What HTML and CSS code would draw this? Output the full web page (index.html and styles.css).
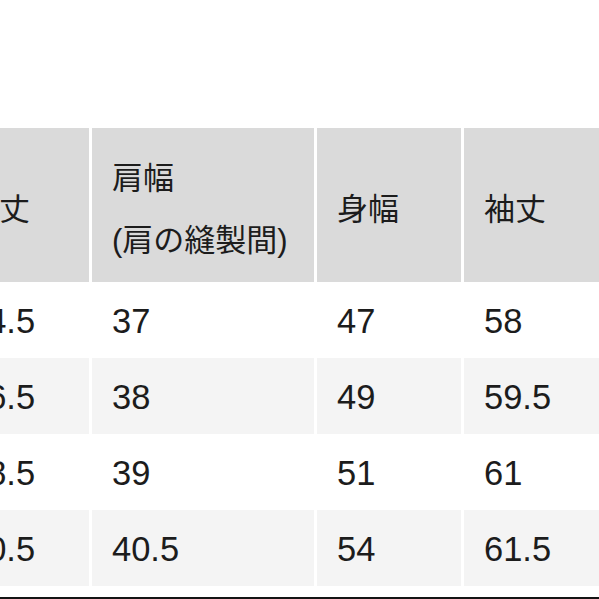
FILE: index.html
```html
<!DOCTYPE html>
<html lang="ja">
<head>
<meta charset="utf-8">
<link rel="stylesheet" href="styles.css">
</head>
<body>
<div class="page">
  <div class="sheet">
    <div class="grid">
      <div class="cell head"><span class="lbl">着丈</span></div>
      <div class="cell head"><span class="lbl">肩幅<br>(肩の縫製間)</span></div>
      <div class="cell head"><span class="lbl">身幅</span></div>
      <div class="cell head"><span class="lbl">袖丈</span></div>

      <div class="cell">64.5</div>
      <div class="cell">37</div>
      <div class="cell">47</div>
      <div class="cell">58</div>

      <div class="cell alt">66.5</div>
      <div class="cell alt">38</div>
      <div class="cell alt">49</div>
      <div class="cell alt">59.5</div>

      <div class="cell">68.5</div>
      <div class="cell">39</div>
      <div class="cell">51</div>
      <div class="cell">61</div>

      <div class="cell alt">70.5</div>
      <div class="cell alt">40.5</div>
      <div class="cell alt">54</div>
      <div class="cell alt">61.5</div>
    </div>
  </div>
  <div class="rule"></div>
</div>
</body>
</html>
```

FILE: styles.css
```css
html, body {
  margin: 0;
  padding: 0;
  background: #ffffff;
}

body {
  width: 599px;
  height: 599px;
  overflow: hidden;
  font-family: "Liberation Sans", "Noto Sans CJK JP", sans-serif;
  color: #1c1c1c;
}

.page {
  display: flex;
  flex-direction: column;
  width: 599px;
  height: 599px;
  overflow: hidden;
}

.sheet {
  padding-top: 128px;
  margin-left: -52px;
}

.grid {
  display: grid;
  grid-template-columns: 141px 222px 144px 220px;
  grid-template-rows: 154px 76px 76px 76px 76px;
  column-gap: 3px;
}

.cell {
  display: flex;
  align-items: center;
  padding: 2px 0 0 20px;
  font-size: 34.5px;
  background: #ffffff;
}

.cell.alt {
  background: #f4f4f4;
}

.cell.head {
  background: #dadada;
  padding-top: 10px;
}

.lbl {
  font-family: "Liberation Sans", "Noto Sans CJK JP", sans-serif;
  font-size: 31px;
  line-height: 62px;
}

.rule {
  flex: none;
  margin-top: 11px;
  height: 2px;
  background: #141414;
}
```
